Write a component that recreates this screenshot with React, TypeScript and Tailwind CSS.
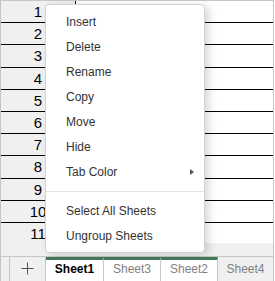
import React from "react";

const rows = [1, 2, 3, 4, 5, 6, 7, 8, 9, 10, 11];

const menuItems = ["Insert", "Delete", "Rename", "Copy", "Move", "Hide"];

const tabs = [
  { name: "Sheet1", active: true, grouped: true },
  { name: "Sheet3", active: false, grouped: true },
  { name: "Sheet2", active: false, grouped: true },
  { name: "Sheet4", active: false, grouped: false },
];

function MenuItem({ label, submenu }: { label: string; submenu?: boolean }) {
  return (
    <div className="flex h-[25px] items-center justify-between pl-[20px] pr-[10px] text-[12px] text-[#333]">
      <span>{label}</span>
      {submenu && (
        <span className="h-0 w-0 border-y-[3px] border-l-[4px] border-y-transparent border-l-[#555]" />
      )}
    </div>
  );
}

export default function App() {
  return (
    <div
      className="relative flex h-[281px] w-[274px] flex-col overflow-hidden border-x border-t border-[#c6c6c6] bg-white"
      style={{ fontFamily: '"Liberation Sans", Arial, sans-serif' }}
    >
      {/* Grid */}
      <div className="flex flex-col">
        {rows.map((r) => (
          <div
            key={r}
            className={`flex ${r === 11 ? "h-[20px]" : "h-[22.2px] border-b border-black"}`}
          >
            <div className="w-[75px] shrink-0 border-r border-black bg-[#f0f0f0] text-center text-[15px] leading-[22px] text-black">
              {r}
            </div>
            <div className="flex-1 bg-white" />
          </div>
        ))}
        <div className="h-[13px] bg-[#f0f0f0]" />
      </div>

      {/* Sheet tabs */}
      <div className="flex h-[25px] shrink-0 border-t border-[#c6c6c6] bg-[#f0f0f0] text-[12px]">
        <div className="w-[8px]" />
        <div className="flex w-[37px] items-center justify-center border-x border-[#c6c6c6]">
          <svg width="13" height="13" viewBox="0 0 13 13">
            <path d="M6.5 0.5v12M0.5 6.5h12" stroke="#555" strokeWidth="1" />
          </svg>
        </div>
        {tabs.map((t, i) => (
          <div
            key={t.name}
            className={`flex items-center justify-center ${
              i === tabs.length - 1 ? "flex-1" : i === 0 ? "w-[58px] border-r" : "w-[57px] border-r"
            } border-[#c6c6c6] ${t.grouped ? "border-t-[3px] border-t-[#457a57] bg-white" : "bg-[#f0f0f0]"} ${
              t.active ? "font-bold text-black" : "text-[#808080]"
            }`}
          >
            <span className={t.grouped ? "-mt-[3px]" : ""}>{t.name}</span>
          </div>
        ))}
      </div>

      {/* Context menu */}
      <div className="absolute left-[44px] top-[3px] w-[160px] rounded-[4px] border border-[#d2d2d2] bg-white py-[4px] shadow-[4px_2px_8px_rgba(0,0,0,0.15)]">
        {menuItems.map((m) => (
          <MenuItem key={m} label={m} />
        ))}
        <MenuItem label="Tab Color" submenu />
        <div className="mb-[6px] mt-[7px] h-px bg-[#e2e2e2]" />
        <MenuItem label="Select All Sheets" />
        <MenuItem label="Ungroup Sheets" />
      </div>
    </div>
  );
}
